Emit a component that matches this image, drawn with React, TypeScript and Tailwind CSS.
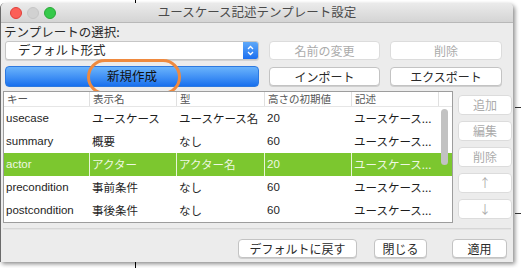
import React from "react";

const jp = { fontFamily: '"Noto Sans CJK JP", "Noto Sans", sans-serif' };
const latin = { fontFamily: '"Liberation Sans", "Noto Sans CJK JP", sans-serif' };

interface Row {
  key: string;
  name: string;
  type: string;
  height: string;
  desc: string;
}

const rows: Row[] = [
  { key: "usecase", name: "ユースケース", type: "ユースケース名", height: "20", desc: "ユースケース..." },
  { key: "summary", name: "概要", type: "なし", height: "60", desc: "ユースケース..." },
  { key: "actor", name: "アクター", type: "アクター名", height: "20", desc: "ユースケース..." },
  { key: "precondition", name: "事前条件", type: "なし", height: "60", desc: "ユースケース..." },
  { key: "postcondition", name: "事後条件", type: "なし", height: "60", desc: "ユースケース..." },
];

const headers = ["キー", "表示名", "型", "高さの初期値", "記述"];

const MacButton: React.FC<{ label: string; disabled?: boolean; className?: string }> = ({ label, disabled, className }) => (
  <div
    className={`flex items-center justify-center rounded-[4px] border bg-white text-[12px] leading-none ${
      disabled ? "border-[#dcdcdc] text-[#ababab]" : "border-[#c3c3c3] text-[#2a2a2a] shadow-[0_1px_0_rgba(0,0,0,0.12)]"
    } ${className ?? ""}`}
    style={jp}
  >
    {label}
  </div>
);

export default function App() {
  return (
    <div className="relative h-[268px] w-[521px] overflow-hidden bg-white">
      <div className="absolute left-[135px] top-0 h-[3px] w-px bg-black" />
      <div className="absolute bottom-0 left-[135px] h-[6px] w-px bg-black" />
      <div className="absolute left-[515px] top-[107px] h-px w-[6px] bg-[#333]" />
      <div className="absolute left-[515px] top-[213px] h-px w-[6px] bg-[#333]" />

      <div className="mt-[3px] flex h-[259px] w-[513px] flex-col overflow-hidden rounded-t-[5px] border-l border-[#6a6a6a] bg-[#ececec] shadow-[2px_2px_4px_rgba(0,0,0,0.45)]">
        {/* title bar */}
        <div className="relative flex h-[20px] shrink-0 items-center border-b border-[#b8b8b8] bg-gradient-to-b from-[#ebebeb] to-[#d4d4d4]">
          <div className="flex gap-[5px] pl-[9px]">
            <span className="h-[12px] w-[12px] rounded-full border border-[#df3f3a] bg-[#fc5f57]" />
            <span className="h-[12px] w-[12px] rounded-full border border-[#c5c5c5] bg-[#d1d1d1]" />
            <span className="h-[12px] w-[12px] rounded-full border border-[#2aa838] bg-[#35c94a]" />
          </div>
          <div className="absolute inset-0 flex items-center justify-center text-[12.5px] text-[#4a4a4a]" style={jp}>
            ユースケース記述テンプレート設定
          </div>
        </div>

        {/* content */}
        <div className="flex flex-1 flex-col">
          <div className="pl-[3px] pt-[1px] text-[12.5px] leading-[16px] text-[#2a2a2a]" style={jp}>
            テンプレートの選択:
          </div>

          <div className="mt-[1px] grid grid-cols-[254px_111px_112px] gap-x-[10px] pl-[4px]">
            <div className="flex h-[19px] items-center justify-between rounded-[3px] border border-[#c6c6c6] bg-white shadow-[0_1px_0_rgba(0,0,0,0.1)]">
              <span className="pl-[12px] text-[12.5px] text-[#2a2a2a]" style={jp}>
                デフォルト形式
              </span>
              <span className="flex h-[17px] w-[15px] items-center justify-center rounded-r-[2px] bg-gradient-to-b from-[#5ea8f8] to-[#1b6ff0]">
                <svg width="7" height="11" viewBox="0 0 7 11" fill="none" stroke="white" strokeWidth="1.3">
                  <path d="M1 4 L3.5 1.5 L6 4" />
                  <path d="M1 7 L3.5 9.5 L6 7" />
                </svg>
              </span>
            </div>
            <MacButton label="名前の変更" disabled className="h-[19px]" />
            <MacButton label="削除" disabled className="h-[19px]" />

            <div className="relative mt-[6px] flex h-[21px] items-center justify-center rounded-[4px] border border-[#2d79e0] bg-gradient-to-b from-[#6ab3fb] to-[#1770ee] text-[12.5px] text-[#111]" style={jp}>
              新規作成
              <div className="absolute left-[81px] top-[-8px] h-[36px] w-[94px] rounded-full border-[3px] border-[#ef8a3f]" />
            </div>
            <MacButton label="インポート" className="mt-[7px] h-[19px]" />
            <MacButton label="エクスポート" className="mt-[7px] h-[19px]" />
          </div>

          {/* table + side buttons */}
          <div className="mt-[4px] flex pl-[2px]">
            <div className="relative h-[132px] w-[450px] overflow-hidden border border-[#9d9d9d] bg-white">
              <div className="grid h-[15px] grid-cols-[86px_87px_88px_87px_87px] border-b border-[#e6e6e6] text-[10.5px] leading-[14px] text-[#555]" style={jp}>
                {headers.map((h) => (
                  <div key={h} className="border-r border-[#e0e0e0] pl-[3px]">
                    {h}
                  </div>
                ))}
              </div>
              {rows.map((r) => {
                const sel = r.key === "actor";
                const cells = [r.key, r.name, r.type, r.height, r.desc];
                return (
                  <div
                    key={r.key}
                    className={`grid h-[23px] grid-cols-[86px_87px_88px_87px_87px] items-center ${
                      sel ? "bg-[#7cc72f] text-[#eef8e2]" : "text-[#1e1e1e]"
                    }`}
                  >
                    {cells.map((c, i) => {
                      const isLatin = i === 0 || i === 3;
                      return (
                        <div
                          key={i}
                          className={`flex h-full items-center whitespace-nowrap pl-[2px] pt-[1px] ${
                            isLatin ? "text-[11.5px]" : "text-[11.5px]"
                          } ${sel && i < 4 ? "border-r border-[#e8f5d8]" : ""}`}
                          style={isLatin ? latin : jp}
                        >
                          {c}
                        </div>
                      );
                    })}
                  </div>
                );
              })}
              <div className="absolute right-[4px] top-[17px] h-[56px] w-[7px] rounded-full bg-[#c2c2c2]" />
            </div>

            <div className="ml-[5px] flex w-[54px] flex-col gap-[6px] pt-[4px]">
              <MacButton label="追加" disabled className="h-[20px]" />
              <MacButton label="編集" disabled className="h-[20px]" />
              <MacButton label="削除" disabled className="h-[20px]" />
              <MacButton label="↑" disabled className="h-[20px]" />
              <MacButton label="↓" disabled className="h-[20px]" />
            </div>
          </div>

          <div className="mx-[2px] mt-[5px] h-[2px] border-t border-[#d6d6d6] bg-[#e4e4e4]" />

          <div className="mt-[9px] flex justify-end gap-[17px] pr-[6px]">
            <MacButton label="デフォルトに戻す" className="h-[19px] w-[119px]" />
            <MacButton label="閉じる" className="mr-[8px] h-[19px] w-[53px]" />
            <MacButton label="適用" className="h-[19px] w-[55px]" />
          </div>
        </div>
      </div>
    </div>
  );
}
